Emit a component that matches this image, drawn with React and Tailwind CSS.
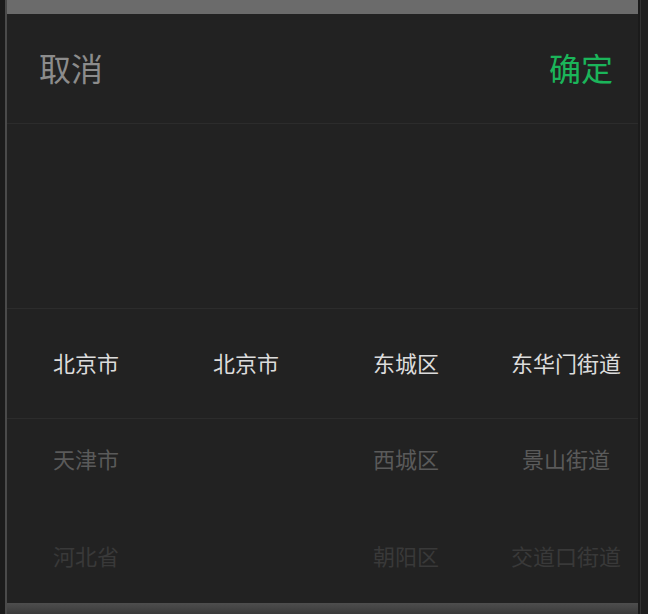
import React from 'react';

const FONT = { fontFamily: '"Noto Sans CJK SC", "Noto Sans", sans-serif' };

const rows = [
  { key: 'selected', items: ['北京市', '北京市', '东城区', '东华门街道'] },
  { key: 'next', items: ['天津市', '', '西城区', '景山街道'] },
  { key: 'last', items: ['河北省', '', '朝阳区', '交道口街道'] },
];

function PickerRow({ items, className, textClass }) {
  return (
    <div className={`-ml-px grid w-[640px] grid-cols-4 ${className}`}>
      {items.map((label, i) => (
        <div key={i} className={`flex items-center justify-center whitespace-nowrap text-[22px] ${textClass}`}>
          {label}
        </div>
      ))}
    </div>
  );
}

export default function App() {
  return (
    <div className="flex h-[614px] w-[648px] bg-[#1b1b1b]" style={FONT}>
      <div className="w-[5px] bg-[#1b1b1b]" />
      <div className="w-[2px] bg-[#4a4a4a]" />
      <div className="flex w-[631px] flex-col overflow-hidden bg-[#222222]">
        <div className="h-[14px] shrink-0 bg-[#6b6b6b]" />

        <div className="flex h-[110px] shrink-0 items-center justify-between border-b border-[#2c2c2c] pb-[4px] pl-[32px] pr-[25px] text-[32px] leading-none">
          <span className="text-[#8c8c8c]">取消</span>
          <span className="text-[#1bb55a]">确定</span>
        </div>

        <div className="h-[185px] shrink-0 border-b border-[#2c2c2c]" />

        <PickerRow items={rows[0].items} className="h-[110px] shrink-0 border-b border-[#2c2c2c] pb-[3px]" textClass="text-[#dcdcdc]" />
        <PickerRow items={rows[1].items} className="h-[82px] shrink-0 pb-[3px]" textClass="text-[#5a5a5a]" />
        <PickerRow items={rows[2].items} className="h-[102px] shrink-0 pt-[6px]" textClass="text-[#393939]" />

        <div className="h-[11px] shrink-0 bg-gradient-to-b from-[#4e4e4e] to-[#3a3a3a]" />
      </div>
      <div className="w-[2px] bg-[#1b1b1b]" />
      <div className="w-px bg-[#333333]" />
      <div className="flex-1 bg-[#1f1f1f]" />
    </div>
  );
}
